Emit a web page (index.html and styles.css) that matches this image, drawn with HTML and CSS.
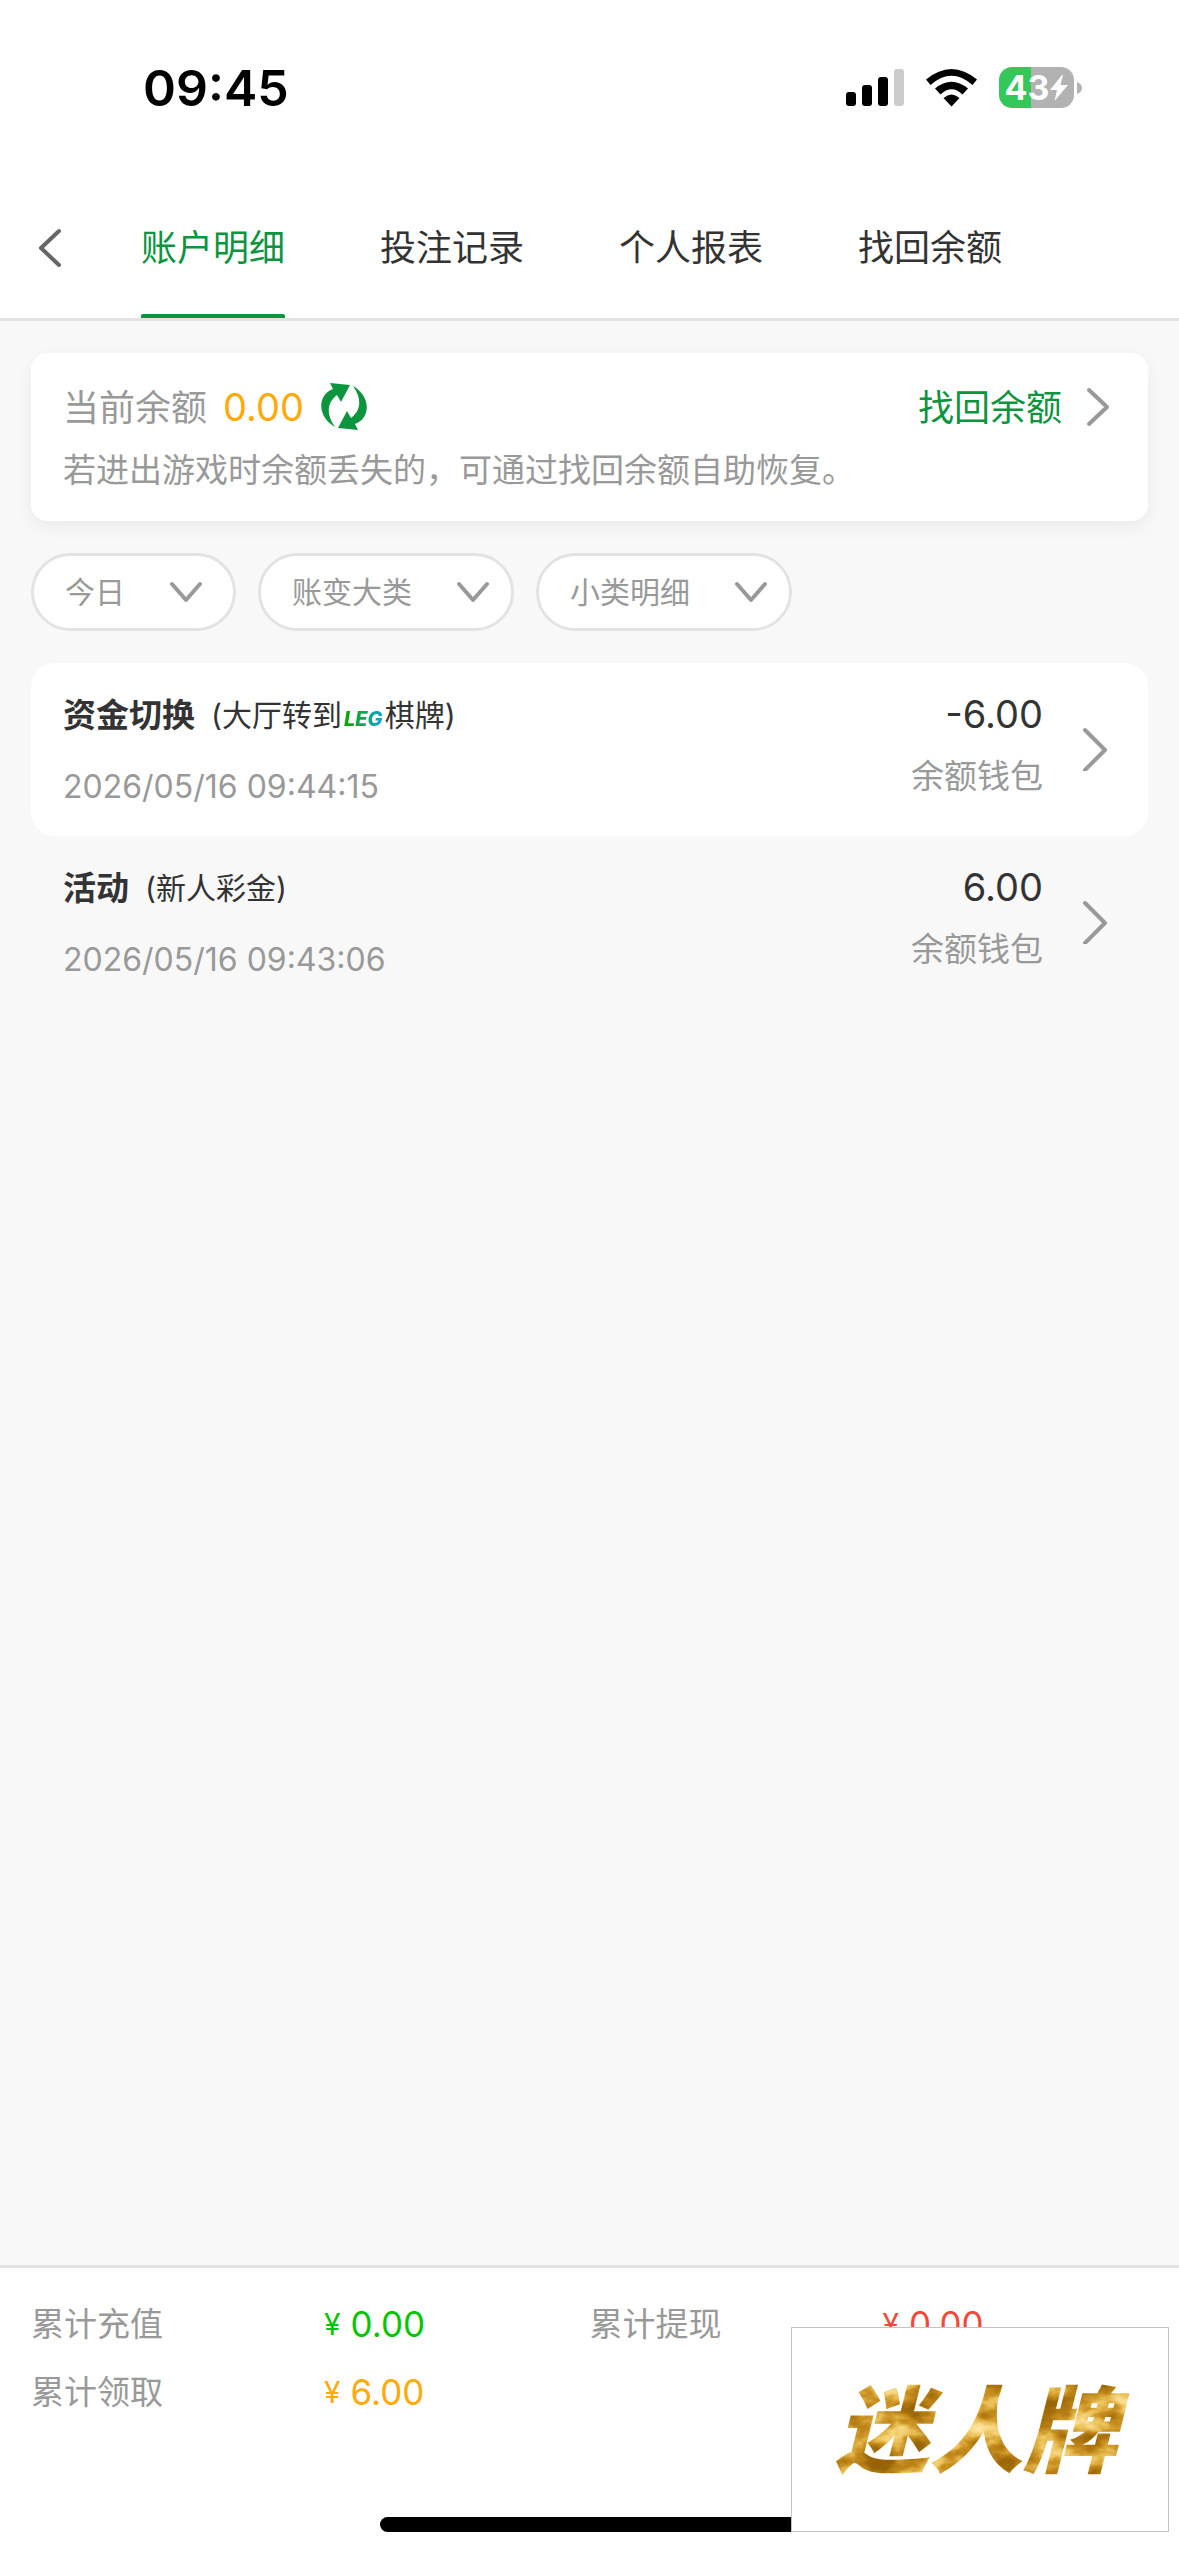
FILE: index.html
```html
<!DOCTYPE html>
<html lang="zh-CN">
<head>
<meta charset="utf-8">
<meta name="viewport" content="width=device-width, initial-scale=1">
<title>账户明细</title>
<link rel="stylesheet" href="styles.css">
</head>
<body>
<div class="status">
  <span class="status-time">09:45</span>
  <div class="status-icons">
    <svg width="58" height="38" viewBox="0 0 58 38" aria-hidden="true">
      <rect x="0" y="23" width="10" height="14" rx="3"/>
      <rect x="16" y="16" width="10" height="21" rx="3"/>
      <rect x="32" y="8" width="10" height="29" rx="3"/>
      <rect x="48" y="0" width="10" height="37" rx="3" fill="#ccc"/>
    </svg>
    <svg width="51" height="38" viewBox="0 0 51 38" aria-hidden="true">
      <path d="M0 10.500Q25.500 -10.500 51 10.500L46.500 16Q25.500 -2.500 4.500 16Z"/>
      <path d="M9 19.500Q25.500 6 42 19.500L36.500 25.500Q25.500 15 14.500 25.500Z"/>
      <path d="M17.500 29Q25.500 22 33.500 29L25.500 37.500Z"/>
    </svg>
    <div class="battery">
      <span>43</span>
      <svg width="18" height="26" viewBox="0 0 18 26" aria-hidden="true"><path d="M12 0L0 15H7L4.500 26L18 10H10.500L13 0Z" fill="#fff"/></svg>
    </div>
    <svg class="battery-cap" width="5" height="12" viewBox="0 0 5 12" aria-hidden="true"><path d="M0 0Q5 2 5 6T0 12Z" fill="#b2b2b2"/></svg>
  </div>
</div>

<header class="header">
  <button class="back" type="button" aria-label="返回">
    <svg width="28" height="42" viewBox="0 0 28 42"><path d="M24 4L6 21L24 38"/></svg>
  </button>
  <nav class="tabs">
    <a class="tab tab--active" href="#account">账户明细</a>
    <a class="tab" href="#bets">投注记录</a>
    <a class="tab" href="#report">个人报表</a>
    <a class="tab" href="#recover">找回余额</a>
  </nav>
</header>

<main class="main">
  <section class="balance">
    <div class="balance-row">
      <span class="balance-label">当前余额</span>
      <span class="balance-value">0.00</span>
      <button class="refresh" type="button" aria-label="刷新">
        <svg width="46" height="48" viewBox="0 0 46 48">
          <path d="M9 0L29 2L20 19L16 12C7 19 4 30 14 44C-4 34 -4 12 12 6Z"/>
          <path d="M37 47L17 45L26 28L30 35C39 28 42 17 32 3C50 13 50 35 34 41Z"/>
        </svg>
      </button>
      <a class="recover" href="#recover"><span class="recover-text">找回余额</span>
        <svg class="chevron" width="28" height="42" viewBox="0 0 28 42"><path d="M5 4L23 21L5 38"/></svg>
      </a>
    </div>
    <p class="balance-note">若进出游戏时余额丢失的，可通过找回余额自助恢复。</p>
  </section>

  <div class="filters">
    <label class="filter filter--day">
      <select aria-label="日期"><option>今日</option></select>
      <svg class="chevron" width="32" height="22" viewBox="0 0 32 22"><path d="M2 3L16 19L30 3"/></svg>
    </label>
    <label class="filter">
      <select aria-label="账变大类"><option>账变大类</option></select>
      <svg class="chevron" width="32" height="22" viewBox="0 0 32 22"><path d="M2 3L16 19L30 3"/></svg>
    </label>
    <label class="filter">
      <select aria-label="小类明细"><option>小类明细</option></select>
      <svg class="chevron" width="32" height="22" viewBox="0 0 32 22"><path d="M2 3L16 19L30 3"/></svg>
    </label>
  </div>

  <ul class="records">
    <li>
      <a class="record record--white" href="#record-1">
        <span class="record-info">
          <span class="record-title"><strong>资金切换</strong><span class="record-sub">(大厅转到<span class="leg">LEG</span>棋牌)</span></span>
          <time class="record-time">2026/05/16 09:44:15</time>
        </span>
        <span class="record-side">
          <span class="record-amount">-6.00</span>
          <span class="record-wallet">余额钱包</span>
        </span>
        <svg class="chevron" width="28" height="48" viewBox="0 0 28 48"><path d="M3 7L23 27L3 47"/></svg>
      </a>
    </li>
    <li>
      <a class="record" href="#record-2">
        <span class="record-info">
          <span class="record-title"><strong>活动</strong><span class="record-sub">(新人彩金)</span></span>
          <time class="record-time">2026/05/16 09:43:06</time>
        </span>
        <span class="record-side">
          <span class="record-amount">6.00</span>
          <span class="record-wallet">余额钱包</span>
        </span>
        <svg class="chevron" width="28" height="48" viewBox="0 0 28 48"><path d="M3 7L23 27L3 47"/></svg>
      </a>
    </li>
  </ul>
</main>

<footer class="footer">
  <dl class="totals">
    <div class="total"><dt>累计充值</dt><dd class="green"><span class="yen">¥</span>0.00</dd></div>
    <div class="total"><dt>累计提现</dt><dd class="red"><span class="yen">¥</span>0.00</dd></div>
    <div class="total"><dt>累计领取</dt><dd class="orange"><span class="yen">¥</span>6.00</dd></div>
  </dl>
  <div class="home-bar"></div>
  <div class="badge">
    <svg width="310" height="120" viewBox="0 0 310 120">
      <defs>
        <filter id="gold-leaf" x="0" y="0" width="100%" height="100%" color-interpolation-filters="sRGB">
          <feTurbulence type="fractalNoise" baseFrequency="0.025 0.04" numOctaves="4" seed="8"/>
          <feColorMatrix values="1 0 0 0 0  1 0 0 0 0  1 0 0 0 0  0 0 0 0 1"/>
          <feComponentTransfer>
            <feFuncR type="table" tableValues="0.6 0.6 0.6 0.7 0.8 0.92 0.98 1 1"/>
            <feFuncG type="table" tableValues="0.38 0.38 0.4 0.48 0.58 0.76 0.86 0.9 0.9"/>
            <feFuncB type="table" tableValues="0.03 0.03 0.03 0.07 0.14 0.35 0.55 0.65 0.65"/>
          </feComponentTransfer>
          <feComposite in2="SourceGraphic" operator="in"/>
        </filter>
      </defs>
      <text class="badge-text" x="151" y="95" text-anchor="middle" filter="url(#gold-leaf)">迷人牌</text>
    </svg>
  </div>
</footer>
</body>
</html>
```
FILE: styles.css
```css
* { box-sizing: border-box; }

body {
  margin: 0;
  min-height: 100vh;
  display: flex;
  flex-direction: column;
  position: relative;
  background: #f8f8f8;
  color: #333;
  font-family: "Inter", "Noto Sans CJK SC", sans-serif;
  font-size: 33px;
}

a { color: inherit; text-decoration: none; }
button { border: 0; padding: 0; background: none; cursor: pointer; }
svg { display: block; flex: none; }

.status {
  display: flex;
  align-items: center;
  justify-content: space-between;
  height: 177px;
  padding: 0 97px 2px 143px;
  background: #fff;
  color: #000;
}
.status-time { font-size: 50px; font-weight: 600; line-height: 60px; }
.status-icons { display: flex; align-items: center; gap: 22px; }
.battery {
  display: flex;
  align-items: center;
  justify-content: center;
  gap: 1px;
  width: 75px;
  height: 41px;
  border-radius: 13px;
  background: linear-gradient(90deg, #34c759 43%, #b2b2b2 43%);
  color: #fff;
  font-size: 34px;
  font-weight: 700;
}
.battery-cap { margin-left: -19px; }

.header {
  display: flex;
  align-items: stretch;
  height: 144px;
  border-bottom: 3px solid #e3e3e3;
  background: #fff;
}
.back { width: 72px; padding-left: 35px; }
.back path { fill: none; stroke: #666; stroke-width: 4; stroke-linecap: round; stroke-linejoin: round; }
.tabs { display: flex; gap: 95px; margin-left: 69px; }
.tab {
  display: flex;
  align-items: center;
  padding-bottom: 5px;
  font-size: 36px;
}
.tab--active { color: #0d943f; position: relative; }
.tab--active::after {
  content: "";
  position: absolute;
  left: 0;
  right: 0;
  bottom: 0;
  height: 4px;
  border-radius: 2px 2px 0 0;
  background: #0d943f;
}

.main { flex: 1; padding: 32px 31px; }

.balance {
  padding: 24px 36px 26px 32px;
  border-radius: 16px;
  background: #fff;
  box-shadow: 0 6px 18px rgba(0, 0, 0, 0.06);
}
.balance-row { display: flex; align-items: center; height: 60px; font-size: 36px; }
.balance-label, .recover-text { padding-bottom: 4px; }
.balance-label { color: #999; }
.balance-value { margin: 0 17px 0 16px; color: #ffaa09; font-size: 38px; }
.refresh path { fill: #0d943f; }
.recover { display: flex; align-items: center; gap: 22px; margin-left: auto; color: #0d943f; }
.balance-note { margin: 8px 0 0; color: #999; line-height: 50px; }

.chevron path { fill: none; stroke: #999; stroke-width: 4; stroke-linecap: round; stroke-linejoin: round; }

.filters { display: flex; gap: 22px; margin-top: 32px; }
.filter { display: grid; align-items: center; }
.filter select {
  grid-area: 1 / 1;
  height: 78px;
  padding: 0 99px 0 31px;
  border: 3px solid #e3e3e3;
  border-radius: 39px;
  background: #fff;
  color: #999;
  font: inherit;
  font-size: 30px;
  appearance: none;
}
.filter .chevron { grid-area: 1 / 1; justify-self: end; margin-right: 25px; pointer-events: none; }
.filter--day select { padding-right: 108px; }
.filter--day .chevron { margin-right: 34px; }

.records { margin: 32px 0 0; padding: 0; list-style: none; }
.record {
  display: flex;
  align-items: center;
  padding: 24px 38px 29px 32px;
  border-radius: 24px;
}
.record--white { background: #fff; }
.record-info, .record-side { display: flex; flex-direction: column; }
.record-info { flex: 1; gap: 26px; }
.record-side { gap: 10px; align-self: flex-start; align-items: flex-end; margin-right: 39px; }
.record-title { display: flex; align-items: center; gap: 16px; height: 54px; padding-bottom: 3px; }
.record-sub { font-size: 30px; }
.record-time { color: #999; font-size: 32px; line-height: 40px; }
.record-amount { font-size: 38px; line-height: 54px; }
.record-wallet { color: #999; line-height: 50px; }
.leg {
  margin: 0 2px;
  font-size: 20px;
  font-weight: 800;
  font-style: italic;
  background: linear-gradient(100deg, #0ca60c 20%, #0fa5d0 90%);
  background-clip: text;
  color: transparent;
}

.footer { border-top: 3px solid #e3e3e3; padding: 22px 31px 24px; background: #fff; }
.totals { display: grid; grid-template-columns: 1fr 1fr; margin: 0 0 91px; line-height: 68px; }
.total { display: flex; }
.total dt { width: 293px; color: #999; }
.total dd { display: flex; margin: 0; font-size: 35px; }
.yen { margin-right: 10px; font-size: 30px; }
.green { color: #08c508; }
.red { color: #f04a3c; }
.orange { color: #ffaa09; }
.home-bar { width: 420px; height: 15px; margin: 0 auto; border-radius: 8px; background: #000; }

.badge {
  position: absolute;
  right: 10px;
  bottom: 24px;
  display: flex;
  align-items: center;
  justify-content: center;
  width: 378px;
  height: 205px;
  border: 1px solid #c4c4c4;
  background: #fff;
}
.badge-text {
  font-size: 94px;
  font-weight: 900;
  font-style: italic;
}
```
